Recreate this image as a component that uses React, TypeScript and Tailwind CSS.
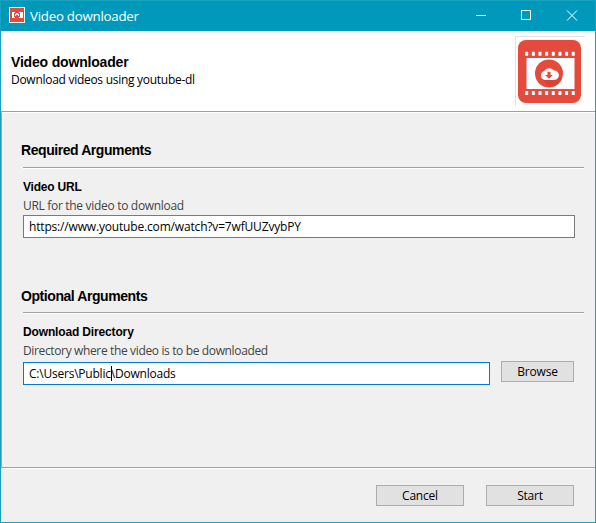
import React from "react";

const ui = "font-['Open_Sans','Noto_Sans',sans-serif]";
const arial = "font-['Liberation_Sans',sans-serif] font-bold";

function FilmIcon({ className }: { className?: string }) {
  const holes = [0, 1, 2, 3, 4, 5, 6, 7];
  return (
    <svg viewBox="0 0 63 63" className={className}>
      <rect width="63" height="63" rx="8" fill="#e54b3c" />
      {holes.map((i) => (
        <g key={i} fill="#fff">
          <rect x={7.2 + i * 6.65} y="11.8" width="3" height="4" rx="0.6" />
          <rect x={7.2 + i * 6.65} y="51" width="3" height="4" rx="0.6" />
        </g>
      ))}
      <rect x="8.5" y="18" width="48" height="31" fill="#fff" />
      <circle cx="31" cy="33.5" r="14" fill="#e54b3c" />
      <path d="M24 39 L31 47.3 Q39 46.5 43 39 L39 36Z" fill="#d64436" />
      <path d="M27 40a4.7 4.7 0 0 1-.8-9.1A6 6 0 0 1 36 30.6a4.7 4.7 0 0 1 .4 9.4Z" fill="#fff" />
      <path d="M29.5 31.8h3v3.2h2.4L31 38.8 27.100 35h2.4Z" fill="#e54b3c" />
    </svg>
  );
}

function TitleIcon() {
  return (
    <svg viewBox="0 0 16 16" className="-mt-px h-4 w-4" shapeRendering="crispEdges">
      <rect width="16" height="16" fill="#fff" />
      <rect x="1" y="1" width="14" height="14" fill="#e54b3c" />
      <rect x="3" y="5" width="11" height="6" fill="#fff" />
      <path d="M6 5h4v1h1v4h-1v1H6v-1H5V6h1Z" fill="#e54b3c" />
      <path d="M7 6h2v1h1v2H6V7h1Z" fill="#fff" />
      <rect x="7" y="8" width="2" height="1" fill="#e54b3c" />
    </svg>
  );
}

function Rule() {
  return <div className="ml-[22px] mr-[11px] h-0.5 border-b border-t border-b-white border-t-[#a0a0a0]" />;
}

function PushButton({ children, className }: { children: React.ReactNode; className: string }) {
  return (
    <button className={`flex items-center justify-center border border-[#adadad] bg-[#e1e1e1] text-xs leading-4 tracking-[-0.2px] ${className}`}>
      {children}
    </button>
  );
}

export default function App() {
  return (
    <div className={`flex h-[523px] w-[596px] flex-col overflow-hidden border border-[#17a2be] bg-[#f0f0f0] text-black ${ui}`}>
      <header className="-mt-px flex h-[31px] shrink-0 items-center bg-[#0099bc] pl-2 text-white">
        <TitleIcon />
        <span className="ml-[5px] whitespace-nowrap text-[13.3px] leading-5 tracking-[-0.25px]">Video downloader</span>
        <svg viewBox="0 0 102 11" className="ml-auto mr-[17px] h-[11px] w-[102px]" fill="none" stroke="#fff">
          <path d="M0 5.5h10" />
          <path d="M45.5.5h9v9h-9Z" />
          <path d="m91 .5 10 10m0-10-10 10" />
        </svg>
      </header>

      <section className="flex h-20 shrink-0 bg-white">
        <div className="flex flex-col pl-2.5 pt-[23px]">
          <h1 className={`whitespace-nowrap text-sm leading-[17px] tracking-[-0.18px] ${arial}`}>Video downloader</h1>
          <p className="mt-px whitespace-nowrap text-xs leading-4 tracking-[-0.28px]">Download videos using youtube-dl</p>
        </div>
        <div className="ml-auto mr-[10px] mt-[5px] h-[70px] w-[70px] border-l border-t border-[#e1e1e1] pl-0.5 pt-[3px]">
          <FilmIcon className="h-[63px] w-[63px]" />
        </div>
      </section>

      <main className="flex h-[357px] shrink-0 flex-col border-t border-[#a0a0a0]">
        <div className="flex h-[355px] flex-col border-l border-t border-l-[#a0a0a0] border-t-white">
          <div className="flex h-[354px] flex-col border-l border-white">
            <div className="-ml-0.5 flex flex-col">
              <h2 className={`ml-5 mt-7 h-[18px] whitespace-nowrap text-sm leading-[18px] tracking-[-0.43px] ${arial}`}>Required Arguments</h2>
              <div className="h-2" />
              <Rule />
              <h3 className={`ml-[22px] mt-2.5 h-4 whitespace-nowrap text-xs leading-4 tracking-[-0.2px] ${arial}`}>Video URL</h3>
              <p className="ml-[22px] mt-[3px] h-4 whitespace-nowrap text-xs leading-4 tracking-[-0.31px] text-[#444]">URL for the video to download</p>
              <div className="ml-[22px] mt-px flex h-[23px] w-[552px] items-center whitespace-nowrap border border-[#7a7a7a] bg-white pl-[5px] text-xs leading-4 tracking-[-0.17px]">
                https://www.youtube.com/watch?v=7wfUUZvybPY
              </div>
              <h2 className={`ml-5 mt-[49px] h-[18px] whitespace-nowrap text-sm leading-[18px] tracking-[-0.43px] ${arial}`}>Optional Arguments</h2>
              <div className="h-[7px]" />
              <Rule />
              <h3 className={`ml-[22px] mt-2.5 h-4 whitespace-nowrap text-xs leading-4 tracking-[-0.15px] ${arial}`}>Download Directory</h3>
              <p className="ml-[22px] mt-[3px] h-4 whitespace-nowrap text-xs leading-4 tracking-[-0.36px] text-[#444]">Directory where the video is to be downloaded</p>
              <div className="ml-[22px] mt-0.5 flex items-start">
                <div className="mt-px flex h-[23px] w-[467px] items-center whitespace-nowrap border border-[#0078d7] bg-white pl-[5px] text-xs leading-4 tracking-[-0.22px]">
                  <span>C:\Users\Public</span>
                  <span className="-mr-px h-[15px] w-px bg-black" />
                  <span>\Downloads</span>
                </div>
                <PushButton className="ml-[11px] h-[21px] w-[73px]">Browse</PushButton>
              </div>
            </div>
          </div>
        </div>
      </main>

      <footer className="flex h-[54px] shrink-0 items-start gap-[22px] border-t border-white pl-[375px] pt-4 shadow-[0_-1px_0_#a0a0a0]">
        <PushButton className="h-[21px] w-[88px]">Cancel</PushButton>
        <PushButton className="h-[21px] w-[88px]">Start</PushButton>
      </footer>
    </div>
  );
}
